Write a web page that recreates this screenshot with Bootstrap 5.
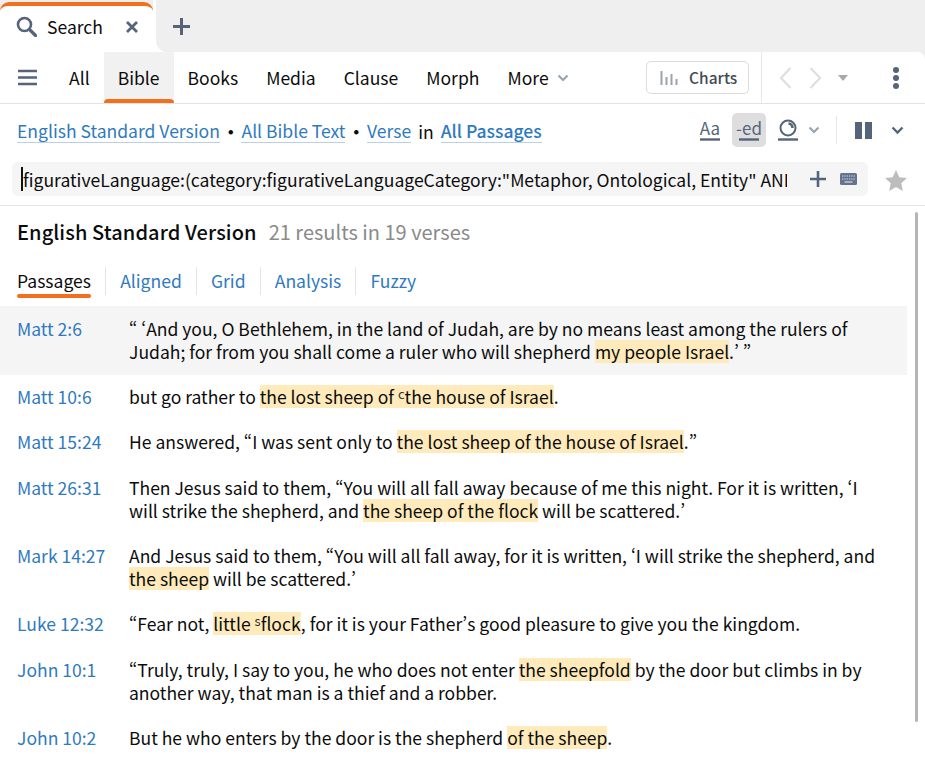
<!DOCTYPE html>
<html lang="en"><head><meta charset="utf-8"><title>Search</title>
<link href="https://cdn.jsdelivr.net/npm/bootstrap@5.3.0/dist/css/bootstrap.min.css" rel="stylesheet">
<style>
html,body{height:762px;overflow:hidden}
body{font-family:"Noto Sans CJK SC","Source Sans Pro","Noto Sans",sans-serif;font-feature-settings:"pwid";background:#fff;color:#0c0c0c;font-size:17.54px;line-height:23px}
a{text-decoration:none}
svg{display:block;flex:none}
.topframe{background:#efefef}
.tabstrip{height:52px}
.activetab{width:153px;height:50px;margin-top:2px;background:#fff;border-top:4px solid #f26f1d;border-radius:9px 9px 0 0;padding:0 15px 5px 16px}
.activetab .lbl{margin-left:10px;margin-right:22px}
.fillerwrap{background:#fff;padding-left:3px}
.filler{height:52px;background:#efefef;border-bottom-left-radius:11px;padding:0 0 0 17px}
.mainbar{height:52px;background:#fff;border-bottom:1px solid #e3e3e3;border-radius:0 8px 0 0;padding-left:18px}
.menuitem{height:51px;padding:0 14px;color:#0c0c0c;display:flex;align-items:center;position:relative}
.menuitem.on{background:#f1f1f1}
.menuitem.on::after{content:"";position:absolute;left:0;right:0;bottom:0;height:4px;background:#f26f1d;border-radius:4px 4px 0 0}
.chartsbtn{width:103px;height:33px;border:1px solid #dcdcdc;border-radius:5px;color:#414a57;font-weight:500;font-size:15.5px;gap:11px;padding-left:13px}
.vsep{width:1px;background:#e8e8e8}
.scopebar{height:52px;padding:0 21px 0 17px}
.scopelink{color:#2f7abf;border-bottom:1px solid #b9d0e8;line-height:23px;margin-top:2px}
.scopelink.strong{font-weight:500}
.scopedot{margin:2px 2px 0;font-weight:700}
.scopein{margin:2px 7px 0}
.tooltile{width:34px;height:34px;border-radius:5px;color:#56647b;font-size:17px;line-height:17px}
.tooltile.on{background:#dedede}
.tooltile svg{margin-top:2px}
.querywrap{height:49px;padding:6px 0 0 12px}
.querybox{width:856px;height:34px;background:#f5f5f5;border-radius:6px;padding:0 11px 0 9px}
.querytext{width:766px;overflow:hidden;white-space:nowrap;border-left:2px solid #111;line-height:26px;height:24px;flex:none}
.resultsbody{border-top:1px solid #e5e5e5;position:relative}
.resulthead{padding:14px 0 0 17px;height:50px;white-space:nowrap}
.resulthead b{font-size:20px;font-weight:500;color:#0c0c0c;letter-spacing:.09px}
.resulthead span{font-size:20px;color:#8a8a8a;margin-left:12px}
.subtabs{padding-left:17px;height:39px;margin-top:11px}
.subtab{color:#2f7abf;padding:0 14.100px;border-left:1px solid #e5e5e5;height:28px;line-height:28px}
.subtab.first{color:#0c0c0c;padding:0;border:0;margin-right:14.100px;position:relative}
.subtab.first::after{content:"";position:absolute;left:0;right:0;bottom:-3px;height:4px;background:#f26f1d;border-radius:3px}
.verselist{width:907px}
.verserow{padding:11.380px 20px 11.380px 17px;line-height:22.750px}
.verserow.hover{background:#f5f5f5;padding-top:12px;padding-bottom:11px}
.verseref{width:112px;flex:none;color:#2f7abf}
.hl{background:linear-gradient(#feeaba,#feeaba) center/100% 23px no-repeat}
.fn{font-size:13px;vertical-align:5px;line-height:0;color:#333}
.scrolltrack{position:absolute;left:915px;top:6px;width:3px;height:510px;background:#b5b5b5;border-radius:2px}
</style></head><body>
<div class="topframe">
<div class="tabstrip d-flex">
  <div class="activetab d-flex align-items-center">
    <svg width="21" height="21" viewBox="0 0 21 21"><circle cx="8.500" cy="8.500" r="6.500" fill="none" stroke="#56647b" stroke-width="2.600"/><path d="M13.500 13.500l6 6" stroke="#56647b" stroke-width="3.200" stroke-linecap="round"/></svg>
    <span class="lbl">Search</span>
    <svg width="14" height="14" viewBox="0 0 14 14"><path d="M2 2l10 10M12 2L2 12" stroke="#56647b" stroke-width="2.800"/></svg>
  </div>
  <div class="fillerwrap flex-grow-1"><div class="filler d-flex align-items-center"><svg width="17" height="17" viewBox="0 0 17 17"><path d="M8.500 0v17M0 8.500h17" stroke="#56647b" stroke-width="3"/></svg></div></div>
</div>
<div class="mainbar d-flex align-items-center">
  <svg style="margin-right:18px" width="19" height="17" viewBox="0 0 19 17"><path d="M0 2h19M0 8.500h19M0 15h19" stroke="#56647b" stroke-width="2.600"/></svg>
  <a class="menuitem" href="#">All</a><a class="menuitem on" href="#">Bible</a><a class="menuitem" href="#">Books</a><a class="menuitem" href="#">Media</a><a class="menuitem" href="#">Clause</a><a class="menuitem" href="#">Morph</a>
  <a class="menuitem" href="#">More<svg class="ms-2" width="12" height="8" viewBox="0 0 12 8"><path d="M1.500 1.500L6 6l4.500-4.500" fill="none" stroke="#9aa3b0" stroke-width="2.200"/></svg></a>
  <div class="flex-grow-1"></div>
  <div class="chartsbtn d-flex align-items-center"><svg width="18" height="16" viewBox="0 0 18 16"><path d="M1.500 1v14M6.500 7v8M11.500 4v11M16.500 9v6" stroke="#9aa3b0" stroke-width="2"/></svg><span>Charts</span></div>
  <div class="vsep align-self-stretch" style="margin-left:12px"></div>
  <svg style="margin-left:17px" width="13" height="24" viewBox="0 0 13 24"><path d="M11.500 2L2 12l9.500 10" fill="none" stroke="#dfdfdf" stroke-width="2.200"/></svg>
  <svg style="margin-left:17px" width="13" height="24" viewBox="0 0 13 24"><path d="M1.500 2L11 12 1.500 22" fill="none" stroke="#dfdfdf" stroke-width="2.200"/></svg>
  <svg style="margin-left:16px" width="10" height="6" viewBox="0 0 10 6"><path d="M0 0h10L5 6z" fill="#a9a9a9"/></svg>
  <svg style="margin:0 25px 0 44px" width="8" height="24" viewBox="0 0 8 24"><circle cx="4" cy="4" r="3" fill="#56647b"/><circle cx="4" cy="12" r="3" fill="#56647b"/><circle cx="4" cy="20" r="3" fill="#56647b"/></svg>
</div>
</div>
<div class="scopebar d-flex align-items-center">
  <a class="scopelink" href="#">English Standard Version</a><span class="scopedot">•</span><a class="scopelink" href="#">All Bible Text</a><span class="scopedot">•</span><a class="scopelink" href="#">Verse</a><span class="scopein">in</span><a class="scopelink strong" href="#">All Passages</a>
  <div class="flex-grow-1"></div>
  <div class="tooltile d-flex flex-column align-items-center justify-content-center">Aa<svg width="20" height="3" viewBox="0 0 20 3"><path d="M0 1.500h20" stroke="#56647b" stroke-width="2.400"/></svg></div>
  <div class="tooltile on d-flex flex-column align-items-center justify-content-center" style="margin-left:5px">-ed<svg width="20" height="3" viewBox="0 0 20 3"><path d="M0 1.500h20" stroke="#56647b" stroke-width="2.400"/></svg></div>
  <svg style="margin-left:12px" width="20" height="22" viewBox="0 0 20 22"><circle cx="10" cy="9" r="7.500" fill="none" stroke="#56647b" stroke-width="2"/><path d="M10.500 4.500A4.500 4.500 0 0 1 14.500 9" fill="none" stroke="#56647b" stroke-width="2.600"/><path d="M0 20.500h20" stroke="#56647b" stroke-width="2.400"/></svg>
  <svg style="margin-left:10px" width="12" height="8" viewBox="0 0 12 8"><path d="M1.500 1.500L6 6l4.500-4.500" fill="none" stroke="#9aa3b0" stroke-width="2.200"/></svg>
  <div class="vsep" style="height:28px;margin:0 18px 0 16px"></div>
  <svg width="17" height="17" viewBox="0 0 17 17"><path d="M0 0h7v17H0zM10 0h7v17h-7z" fill="#56647b"/></svg>
  <svg style="margin-left:19px" width="13" height="9" viewBox="0 0 13 9"><path d="M1.500 1.500l5 5 5-5" fill="none" stroke="#56647b" stroke-width="2.400"/></svg>
</div>
<div class="querywrap d-flex align-items-start">
  <div class="querybox d-flex align-items-center">
    <div class="querytext">figurativeLanguage:(category:figurativeLanguageCategory:"Metaphor, Ontological, Entity" AND referent:sheep)</div>
    <svg class="ms-auto" width="18" height="18" viewBox="0 0 18 18"><path d="M9 1v16M1 9h16" stroke="#56647b" stroke-width="2.600"/></svg>
    <svg style="margin-left:13px" width="17" height="12" viewBox="0 0 17 12"><rect width="17" height="12" rx="1.500" fill="#64748f"/><path d="M2 3h13M2 6h13" stroke="#d6dae0" stroke-width="1.200" stroke-dasharray="1.300 1"/><path d="M4.500 9h8" stroke="#d6dae0" stroke-width="1.200"/></svg>
  </div>
  <svg style="margin:8px 0 0 17px" width="22" height="21" viewBox="0 0 22 21"><path d="M11 0l3.300 7.200 7.700.8-5.800 5.200 1.700 7.800L11 17l-6.900 4 1.700-7.800L0 8l7.700-.8z" fill="#bdbdbd"/></svg>
</div>
<div class="resultsbody">
  <div class="scrolltrack"></div>
  <div class="resulthead"><b>English Standard Version</b><span>21 results in 19 verses</span></div>
  <div class="subtabs d-flex align-items-start"><a class="subtab first" href="#">Passages</a><a class="subtab" href="#">Aligned</a><a class="subtab" href="#">Grid</a><a class="subtab" href="#">Analysis</a><a class="subtab" href="#">Fuzzy</a></div>
  <div class="verselist">
    <div class="verserow hover d-flex"><a class="verseref" href="#">Matt 2:6</a><div>“ ‘And you, O Bethlehem, in the land of Judah, are by no means least among the rulers of Judah; for from you shall come a ruler who will shepherd <span class="hl">my people Israel</span>.’ ”</div></div>
    <div class="verserow d-flex"><a class="verseref" href="#">Matt 10:6</a><div>but go rather to <span class="hl">the lost sheep of <span class="fn">c</span>the house of Israel</span>.</div></div>
    <div class="verserow d-flex"><a class="verseref" href="#">Matt 15:24</a><div>He answered, “I was sent only to <span class="hl">the lost sheep of the house of Israel</span>.”</div></div>
    <div class="verserow d-flex"><a class="verseref" href="#">Matt 26:31</a><div>Then Jesus said to them, “You will all fall away because of me this night. For it is written, ‘I will strike the shepherd, and <span class="hl">the sheep of the flock</span> will be scattered.’</div></div>
    <div class="verserow d-flex"><a class="verseref" href="#">Mark 14:27</a><div>And Jesus said to them, “You will all fall away, for it is written, ‘I will strike the shepherd, and <span class="hl">the sheep</span> will be scattered.’</div></div>
    <div class="verserow d-flex"><a class="verseref" href="#">Luke 12:32</a><div>“Fear not, <span class="hl">little <span class="fn">s</span>flock</span>, for it is your Father’s good pleasure to give you the kingdom.</div></div>
    <div class="verserow d-flex"><a class="verseref" href="#">John 10:1</a><div>“Truly, truly, I say to you, he who does not enter <span class="hl">the sheepfold</span> by the door but climbs in by another way, that man is a thief and a robber.</div></div>
    <div class="verserow d-flex"><a class="verseref" href="#">John 10:2</a><div>But he who enters by the door is the shepherd <span class="hl">of the sheep</span>.</div></div>
  </div>
</div>
</body></html>
